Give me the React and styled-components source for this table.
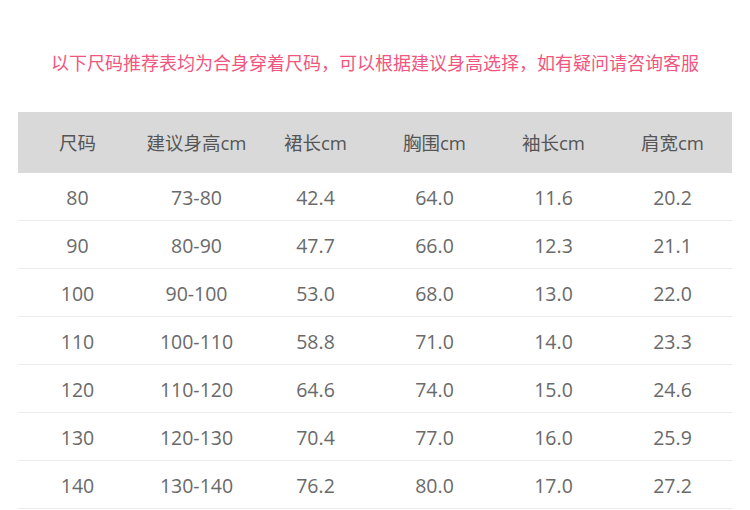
import React from "react";
import styled, { createGlobalStyle } from "styled-components";

const Global = createGlobalStyle`
  html, body { margin: 0; padding: 0; background: #fff; }
  body { font-family: "Open Sans", "Noto Sans CJK SC", sans-serif; }
`;

const Page = styled.div`
  width: 750px;
  height: 510px;
  overflow: hidden;
  display: flex;
  flex-direction: column;
  align-items: center;
  background: #fff;
`;

const Notice = styled.p`
  margin: 48px 0 0;
  height: 28px;
  line-height: 28px;
  font-family: "Noto Sans CJK SC", sans-serif;
  font-size: 18px;
  color: #f2557e;
  text-align: center;
  white-space: nowrap;
`;

const Table = styled.div`
  margin-top: 36px;
  width: 714px;
  align-self: flex-start;
  margin-left: 18px;
  display: flex;
  flex-direction: column;
`;

const Row = styled.div`
  display: grid;
  grid-template-columns: repeat(6, 1fr);
  box-sizing: border-box;
  height: ${(p) => (p.$head ? "61px" : "48px")};
  padding: ${(p) => (p.$head ? "0 0 2px" : "2px 0 0")};
  background: ${(p) => (p.$head ? "#d9d9d9" : "#fff")};
  border-bottom: ${(p) => (p.$head ? "none" : "1px solid #ececec")};
  color: ${(p) => (p.$head ? "#555" : "#6a6a6a")};
  font-size: ${(p) => (p.$head ? "18.5px" : "19.5px")};
`;

const Cell = styled.div`
  display: flex;
  align-items: center;
  justify-content: center;
  white-space: nowrap;
`;

const head = ["尺码", "建议身高cm", "裙长cm", "胸围cm", "袖长cm", "肩宽cm"];
const rows = [
  ["80", "73-80", "42.4", "64.0", "11.6", "20.2"],
  ["90", "80-90", "47.7", "66.0", "12.3", "21.1"],
  ["100", "90-100", "53.0", "68.0", "13.0", "22.0"],
  ["110", "100-110", "58.8", "71.0", "14.0", "23.3"],
  ["120", "110-120", "64.6", "74.0", "15.0", "24.6"],
  ["130", "120-130", "70.4", "77.0", "16.0", "25.9"],
  ["140", "130-140", "76.2", "80.0", "17.0", "27.2"],
];

export default function App() {
  return (
    <>
      <Global />
      <Page>
        <Notice>以下尺码推荐表均为合身穿着尺码，可以根据建议身高选择，如有疑问请咨询客服</Notice>
        <Table>
          <Row $head>
            {head.map((h) => (
              <Cell key={h}>{h}</Cell>
            ))}
          </Row>
          {rows.map((r) => (
            <Row key={r[0]}>
              {r.map((c, i) => (
                <Cell key={i}>{c}</Cell>
              ))}
            </Row>
          ))}
        </Table>
      </Page>
    </>
  );
}
